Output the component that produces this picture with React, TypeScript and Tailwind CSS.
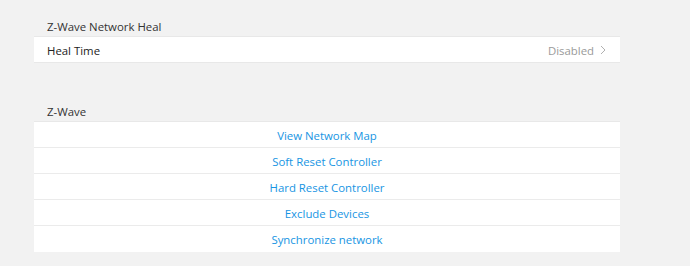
import React from "react";

const actions = [
  "View Network Map",
  "Soft Reset Controller",
  "Hard Reset Controller",
  "Exclude Devices",
  "Synchronize network",
];

export default function App() {
  return (
    <div
      className="w-[690px] h-[266px] bg-[#f2f2f2] overflow-hidden text-[11.4px]"
      style={{ fontFamily: '"Open Sans", "Noto Sans", sans-serif' }}
    >
      <div className="ml-[34px] w-[586px] pt-[15px]">
        <div className="pl-[13px] pt-[2px] h-[21px] flex items-center text-[#333]">Z-Wave Network Heal</div>
        <div className="bg-white border-y border-[#e8e8e8] h-[27px] pt-[2px] flex items-center justify-between pl-[13px] pr-[14px]">
          <span className="text-[#222]">Heal Time</span>
          <span className="flex items-center gap-[6px] text-[#9a9a9a]">
            Disabled
            <svg width="6" height="10" viewBox="0 0 6 10" fill="none">
              <path d="M1 1 L5 5 L1 9" stroke="#b0b0b0" strokeWidth="1" />
            </svg>
          </span>
        </div>
        <div className="pl-[13px] pt-[2px] h-[20px] mt-[38px] flex items-center text-[#333]">Z-Wave</div>
        <div className="bg-white border-t border-[#e8e8e8]">
          {actions.map((a, i) => (
            <div
              key={a}
              className={`h-[26px] pt-[2px] flex items-center justify-center text-[#1795e3] ${
                i < actions.length - 1 ? "border-b border-[#ebebeb]" : ""
              }`}
            >
              {a}
            </div>
          ))}
        </div>
      </div>
    </div>
  );
}
